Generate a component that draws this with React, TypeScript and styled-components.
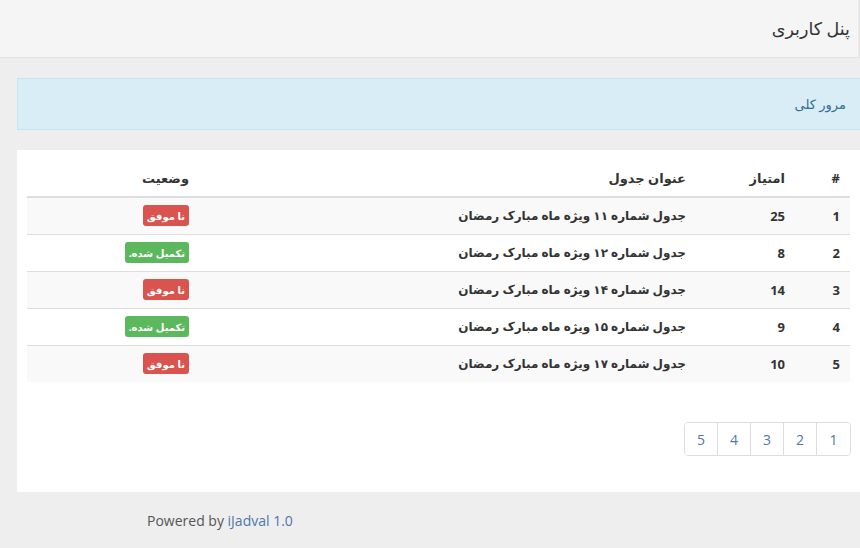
import React from "react";
import styled, { createGlobalStyle } from "styled-components";

type Row = { id: number; score: number; title: string; ok: boolean };

const rows: Row[] = [
  { id: 1, score: 25, title: "جدول شماره ۱۱ ویژه ماه مبارک رمضان", ok: false },
  { id: 2, score: 8, title: "جدول شماره ۱۲ ویژه ماه مبارک رمضان", ok: true },
  { id: 3, score: 14, title: "جدول شماره ۱۴ ویژه ماه مبارک رمضان", ok: false },
  { id: 4, score: 9, title: "جدول شماره ۱۵ ویژه ماه مبارک رمضان", ok: true },
  { id: 5, score: 10, title: "جدول شماره ۱۷ ویژه ماه مبارک رمضان", ok: false },
];

const pages = [1, 2, 3, 4, 5];

const GlobalStyle = createGlobalStyle`
  html, body {
    margin: 0;
    padding: 0;
    background: #eeeeee;
    font-family: "Open Sans", "DejaVu Sans", sans-serif;
    font-size: 13px;
    color: #333;
  }
  * { box-sizing: border-box; }
`;

const App: React.FC = () => {
  return (
    <Page>
      <GlobalStyle />
      <TopBar>
        <PageTitle>پنل کاربری</PageTitle>
      </TopBar>

      <Content>
        <Alert>مرور کلی</Alert>

        <Panel>
          <Table>
            <thead>
              <tr>
                <Th $w={55}>#</Th>
                <Th $w={99}>امتیاز</Th>
                <Th $w={497}>عنوان جدول</Th>
                <Th>وضعیت</Th>
              </tr>
            </thead>
            <tbody>
              {rows.map((r, i) => (
                <Tr key={r.id} $striped={i % 2 === 0}>
                  <Td>{r.id}</Td>
                  <Td>{r.score}</Td>
                  <Td $fa>{r.title}</Td>
                  <Td>
                    <Label $ok={r.ok}>{r.ok ? "تکمیل شده." : "نا موفق"}</Label>
                  </Td>
                </Tr>
              ))}
            </tbody>
          </Table>

          <PagerRow>
            <Pager>
              {pages.map((p) => (
                <PageLink key={p} href="#">
                  {p}
                </PageLink>
              ))}
            </Pager>
          </PagerRow>
        </Panel>
      </Content>

      <Footer>
        Powered by <FooterLink href="#">iJadval 1.0</FooterLink>
      </Footer>
    </Page>
  );
};

export default App;

const Page = styled.div`
  width: 860px;
  min-height: 548px;
  background: #eeeeee;
`;

const TopBar = styled.header`
  height: 58px;
  background: #f5f5f5;
  border-bottom: 1px solid #e3e3e3;
  border-right: 2px solid #e8e8e8;
  display: flex;
  align-items: center;
  direction: rtl;
  padding-right: 8px;
`;

const PageTitle = styled.h1`
  margin: 0;
  font-size: 17.5px;
  font-weight: 400;
  color: #333;
  padding-bottom: 2px;
`;

const Content = styled.main`
  padding: 20px 0 0 17px;
  direction: rtl;
`;

const Alert = styled.div`
  height: 52px;
  background: #d9edf7;
  border: 1px solid #bce8f1;
  border-right: none;
  color: #31708f;
  display: flex;
  align-items: center;
  padding-right: 14px;
  font-size: 13px;
  margin-bottom: 20px;
`;

const Panel = styled.section`
  background: #fff;
  padding: 10px 9px 36px 10px;
`;

const Table = styled.table`
  width: 823px;
  margin-right: 1px;
  border-collapse: collapse;
  direction: rtl;
  margin-bottom: 40px;
`;

const Th = styled.th<{ $w?: number }>`
  width: ${(p) => (p.$w ? `${p.$w}px` : "auto")};
  text-align: right;
  font-weight: 700;
  font-size: 13px;
  color: #333;
  padding: 8px 10px 8px 8px;
  line-height: 20px;
  border-bottom: 2px solid #dddddd;
`;

const Tr = styled.tr<{ $striped: boolean }>`
  background: ${(p) => (p.$striped ? "#f9f9f9" : "#fff")};
  border-top: 1px solid #dddddd;
`;

const Td = styled.td<{ $fa?: boolean }>`
  text-align: right;
  font-weight: 700;
  font-size: ${(p) => (p.$fa ? "12px" : "13px")};
  color: #333;
  height: 37px;
  padding: 0 10px 0 8px;
  line-height: 18px;
  vertical-align: middle;
`;

const Label = styled.span<{ $ok: boolean }>`
  display: inline-block;
  background: ${(p) => (p.$ok ? "#5cb85c" : "#d9534f")};
  color: #fff;
  font-size: 10px;
  font-weight: 700;
  line-height: 16px;
  padding: 3px 4px 2px;
  border-radius: 3px;
  vertical-align: middle;
`;

const PagerRow = styled.div`
  display: flex;
  justify-content: flex-start;
`;

const Pager = styled.nav`
  display: flex;
  direction: rtl;
  border: 1px solid #dddddd;
  border-radius: 4px;
  overflow: hidden;
`;

const PageLink = styled.a`
  display: flex;
  align-items: center;
  justify-content: center;
  width: 33px;
  height: 32px;
  color: #4f77a8;
  text-decoration: none;
  font-size: 14px;
  background: #fff;
  & + & {
    border-right: 1px solid #dddddd;
  }
`;

const Footer = styled.footer`
  padding: 19px 0 0 147px;
  height: 56px;
  font-size: 14px;
  color: #555;
  font-family: "Open Sans", sans-serif;
`;

const FooterLink = styled.a`
  color: #4f77a8;
  text-decoration: none;
`;
